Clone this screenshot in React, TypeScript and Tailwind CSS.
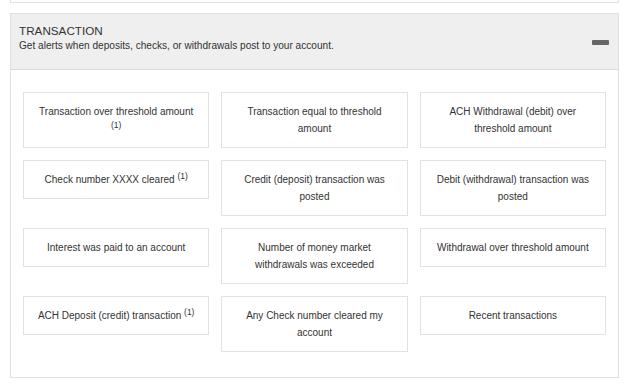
import React from 'react'

type Alert = { label: string; note?: boolean }

const alerts: Alert[] = [
  { label: 'Transaction over threshold amount', note: true },
  { label: 'Transaction equal to threshold amount' },
  { label: 'ACH Withdrawal (debit) over threshold amount' },
  { label: 'Check number XXXX cleared', note: true },
  { label: 'Credit (deposit) transaction was posted' },
  { label: 'Debit (withdrawal) transaction was posted' },
  { label: 'Interest was paid to an account' },
  { label: 'Number of money market withdrawals was exceeded' },
  { label: 'Withdrawal over threshold amount' },
  { label: 'ACH Deposit (credit) transaction', note: true },
  { label: 'Any Check number cleared my account' },
  { label: 'Recent transactions' },
]

function AlertCard({ alert }: { alert: Alert }) {
  return (
    <button
      type="button"
      className="border border-[#e2e2e2] bg-white px-[10px] py-[10px] text-center text-[10px] leading-[17px] text-[#333]"
    >
      {alert.label}
      {alert.note && (
        <>
          {' '}
          <sup className="text-[8.5px]">(1)</sup>
        </>
      )}
    </button>
  )
}

export default function App() {
  return (
    <div className="min-h-[384px] bg-white font-['Liberation_Sans',Arial,sans-serif]">
      <div className="ml-[10px] w-[609px]">
        {/* previous section, only its bottom edge is visible */}
        <div className="h-[3px] border-x border-b border-[#e2e2e2] bg-white" />

        <section className="mt-[10px] border border-[#e0e0e0] bg-white">
          <div className="flex h-[56px] items-start justify-between border-b border-[#d9d9d9] bg-[#efefef] pl-[8px] pr-[9px] pt-[9px]">
            <div>
              <h2 className="text-[11.7px] leading-[15px] text-[#333]">TRANSACTION</h2>
              <p className="text-[10.1px] leading-[15px] text-[#333]">
                Get alerts when deposits, checks, or withdrawals post to your account.
              </p>
            </div>
            <button type="button" aria-label="Collapse" className="mt-[17px]">
              <span className="block h-[5px] w-[17px] rounded-[1px] bg-[#656565]" />
            </button>
          </div>

          <div className="grid grid-cols-3 items-start gap-[12px] px-[12px] pb-[25px] pt-[22px]">
            {alerts.map((a) => (
              <AlertCard key={a.label} alert={a} />
            ))}
          </div>
        </section>
      </div>
    </div>
  )
}
